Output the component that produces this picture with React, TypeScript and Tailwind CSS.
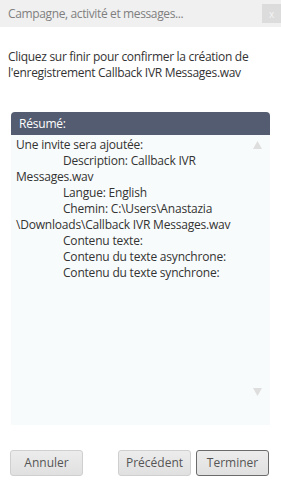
import React from "react";

const summaryLines: { text: string; indent?: boolean }[] = [
  { text: "Une invite sera ajoutée:" },
  { text: "Description: Callback IVR", indent: true },
  { text: "Messages.wav" },
  { text: "Langue: English", indent: true },
  { text: "Chemin: C:\\Users\\Anastazia", indent: true },
  { text: "\\Downloads\\Callback IVR Messages.wav" },
  { text: "Contenu texte:", indent: true },
  { text: "Contenu du texte asynchrone:", indent: true },
  { text: "Contenu du texte synchrone:", indent: true },
];

function DlgButton({ label, focused }: { label: string; focused?: boolean }) {
  return (
    <button
      className={
        "h-[26px] w-[73px] rounded-[3px] bg-gradient-to-b from-[#ececec] to-[#e0e0e0] text-[12px] text-[#555] " +
        (focused ? "border border-[#6b6b6b]" : "border border-[#cfcfcf]")
      }
    >
      {label}
    </button>
  );
}

export default function App() {
  return (
    <div className="w-[281px] h-[486px] bg-white flex flex-col font-['Open_Sans','Noto_Sans',sans-serif] overflow-hidden">
      {/* Title bar */}
      <div className="h-[27px] bg-[#f0f0f0] flex items-center justify-between pl-[8px] shrink-0">
        <span className="text-[12px] text-[#7f7f7f] tracking-[-0.37px]">Campagne, activité et messages...</span>
        <div className="w-[19px] h-[19px] bg-[#dcdcdc] flex items-center justify-center self-start mt-[4px] text-[10px] text-[#f4f4f4] leading-none">
          x
        </div>
      </div>

      {/* Message */}
      <div className="px-[8px] pt-[22px] text-[12px] leading-[16px] text-[#333] tracking-[-0.3px]">
        <p>Cliquez sur finir pour confirmer la création de</p>
        <p>l'enregistrement Callback IVR Messages.wav</p>
      </div>

      {/* Summary */}
      <div className="mx-[11px] mt-[31px] flex flex-col">
        <div className="h-[23px] bg-[#535c70] rounded-t-[4px] flex items-center pl-[8px] text-[12px] text-white tracking-[-0.2px]">
          Résumé:
        </div>
        <div className="h-[290px] bg-[#f8fbfb] flex">
          <div className="flex-1 pl-[5px] pt-[2px] text-[12px] leading-[16px] text-[#333] tracking-[-0.2px]">
            {summaryLines.map((l, i) => (
              <div key={i} className={l.indent ? "pl-[47px]" : ""}>
                {l.text}
              </div>
            ))}
          </div>
          <div className="w-[14px] mr-[6px] flex flex-col justify-between items-center pt-[6px] pb-[29px]">
            <svg width="9" height="8" viewBox="0 0 9 8">
              <path d="M4.5 0 L9 8 L0 8 Z" fill="#dedede" />
            </svg>
            <svg width="9" height="8" viewBox="0 0 9 8">
              <path d="M0 0 L9 0 L4.5 8 Z" fill="#dedede" />
            </svg>
          </div>
        </div>
      </div>

      {/* Buttons */}
      <div className="mt-[25px] flex items-center px-[10px]">
        <DlgButton label="Annuler" />
        <div className="flex-1" />
        <div className="flex gap-[5px] mr-[2px]">
          <DlgButton label="Précédent" />
          <DlgButton label="Terminer" focused />
        </div>
      </div>
    </div>
  );
}
